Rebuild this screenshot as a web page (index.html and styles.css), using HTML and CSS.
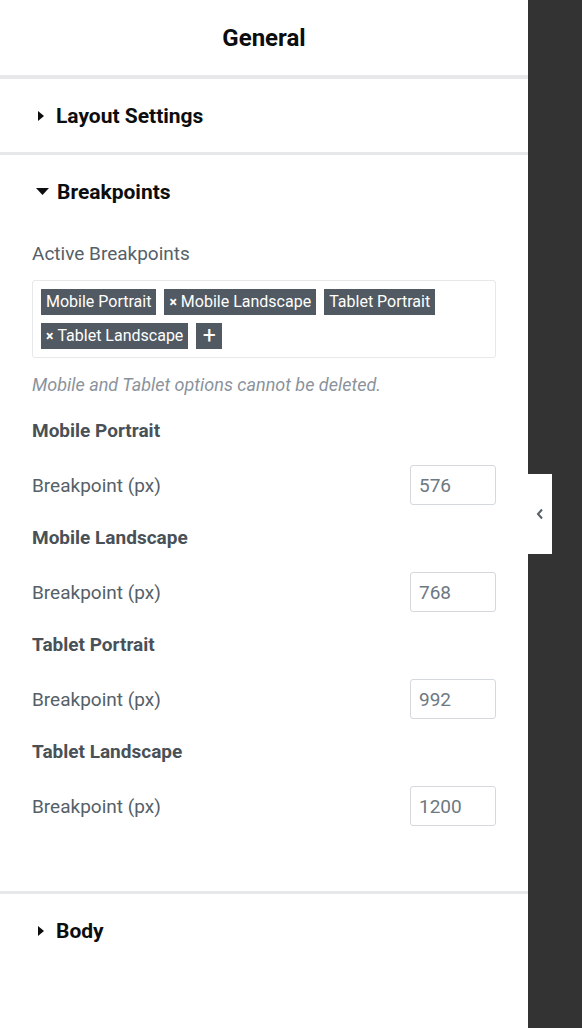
FILE: index.html
```html
<!DOCTYPE html>
<html lang="en">
<head>
  <meta charset="UTF-8" />
  <title>Site Settings - General</title>
  <link rel="stylesheet" href="styles.css">
</head>
<body>

  <div class="editor">
    <aside class="panel">
      <header class="panel-header">General</header>

      <section class="section">
        <h3 class="section-title">
          <svg class="caret" width="6" height="10" viewBox="0 0 6 10"><path d="M0 0 L6 5 L0 10 Z" fill="#0c0d0e"/></svg>
          Layout Settings
        </h3>
      </section>

      <section class="section">
        <h3 class="section-title">
          <svg class="caret caret-open" width="13" height="7" viewBox="0 0 13 7"><path d="M0 0 L13 0 L6.5 7 Z" fill="#0c0d0e"/></svg>
          Breakpoints
        </h3>

        <div class="section-body">
          <div class="control">
            <div class="control-label">Active Breakpoints</div>
            <div class="tags">
              <span class="tag">Mobile Portrait</span>
              <span class="tag"><span class="tag-x">×</span>Mobile Landscape</span>
              <span class="tag">Tablet Portrait</span>
              <span class="tag"><span class="tag-x">×</span>Tablet Landscape</span>
              <span class="tag tag-add">+</span>
            </div>
            <p class="note">Mobile and Tablet options cannot be deleted.</p>
          </div>

          <div class="bp">
            <div class="bp-heading">Mobile Portrait</div>
            <div class="bp-row">
              <label>Breakpoint (px)</label>
              <input type="text" value="576">
            </div>
          </div>

          <div class="bp">
            <div class="bp-heading">Mobile Landscape</div>
            <div class="bp-row">
              <label>Breakpoint (px)</label>
              <input type="text" value="768">
            </div>
          </div>

          <div class="bp">
            <div class="bp-heading">Tablet Portrait</div>
            <div class="bp-row">
              <label>Breakpoint (px)</label>
              <input type="text" value="992">
            </div>
          </div>

          <div class="bp">
            <div class="bp-heading">Tablet Landscape</div>
            <div class="bp-row">
              <label>Breakpoint (px)</label>
              <input type="text" value="1200">
            </div>
          </div>
        </div>
      </section>

      <section class="section">
        <h3 class="section-title">
          <svg class="caret" width="6" height="10" viewBox="0 0 6 10"><path d="M0 0 L6 5 L0 10 Z" fill="#0c0d0e"/></svg>
          Body
        </h3>
      </section>
    </aside>

    <div class="preview">
      <button class="toggle">
        <svg width="8" height="12" viewBox="0 0 8 12"><path d="M6 1.5 L2 6 L6 10.5" fill="none" stroke="#556068" stroke-width="2"/></svg>
      </button>
    </div>
  </div>

</body>
</html>
```

FILE: styles.css
```css
body {
  margin: 0;
  padding: 0;
  font-family: Roboto, "Liberation Sans", sans-serif;
  background: #333333;
}

.editor {
  display: flex;
  height: 1028px;
}

/* Panel */
.panel {
  width: 528px;
  background: #ffffff;
  flex-shrink: 0;
}

.panel-header {
  height: 75px;
  display: flex;
  align-items: center;
  justify-content: center;
  font-size: 24px;
  font-weight: 700;
  color: #0c0d0e;
  border-bottom: 4px solid #e6e8ea;
}

.section {
  border-bottom: 3px solid #e6e8ea;
}

.section:last-child {
  border-bottom: none;
}

.section-title {
  margin: 0;
  height: 73px;
  display: flex;
  align-items: center;
  gap: 12px;
  padding-left: 38px;
  font-size: 21px;
  font-weight: 700;
  color: #0c0d0e;
}

.caret-open {
  margin-left: -2px;
  margin-right: -4px;
}

.section-body {
  padding: 0 32px 65px;
}

/* Active breakpoints */
.control-label {
  font-size: 19px;
  line-height: 24px;
  color: #556068;
  margin-top: 14px;
}

.tags {
  margin-top: 14px;
  border: 1px solid #e6e8ea;
  border-radius: 3px;
  padding: 8px;
  display: flex;
  flex-wrap: wrap;
  gap: 8px;
}

.tag {
  background: #515962;
  color: #ffffff;
  font-size: 16px;
  height: 26px;
  line-height: 26px;
  padding: 0 5px;
}

.tag-x {
  font-size: 14px;
  font-weight: 700;
  margin-right: 4px;
}

.tag-add {
  width: 26px;
  padding: 0;
  text-align: center;
  font-size: 23px;
}

.note {
  margin: 14px 0 0;
  font-size: 18px;
  line-height: 26px;
  font-style: italic;
  color: #8a939c;
}

/* Breakpoint controls */
.bp {
  margin-top: 21px;
}

.bp-heading {
  font-size: 19px;
  line-height: 24px;
  font-weight: 700;
  color: #495157;
}

.bp-row {
  display: flex;
  align-items: center;
  justify-content: space-between;
  margin-top: 22px;
}

.bp-row label {
  font-size: 19px;
  color: #556068;
}

.bp-row input {
  width: 86px;
  height: 40px;
  box-sizing: border-box;
  border: 1px solid #d5d8dc;
  border-radius: 3px;
  padding: 0 8px;
  font-family: Roboto, "Liberation Sans", sans-serif;
  font-size: 19px;
  color: #6d7882;
}

/* Preview side */
.preview {
  flex: 1;
  display: flex;
  align-items: center;
}

.toggle {
  width: 24px;
  height: 80px;
  border: none;
  padding: 0;
  background: #ffffff;
  display: flex;
  align-items: center;
  justify-content: center;
  cursor: pointer;
}
```
